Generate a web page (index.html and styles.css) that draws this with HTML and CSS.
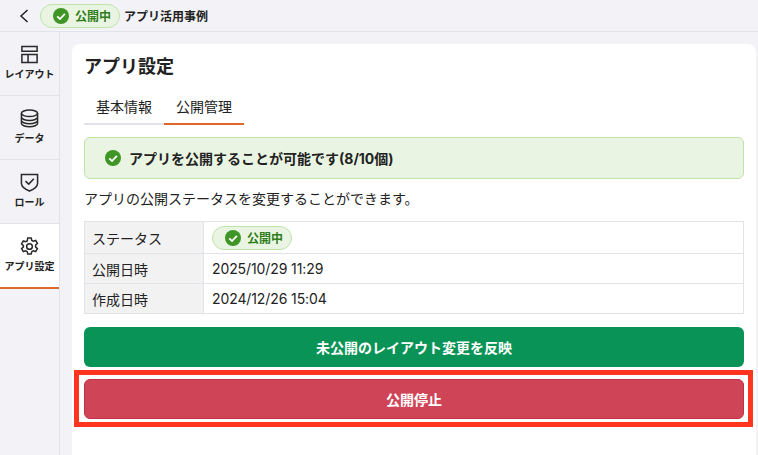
FILE: index.html
```html
<!doctype html>
<html lang="ja">
  <head>
    <meta charset="utf-8" />
    <title>アプリ設定</title>
    <link rel="stylesheet" href="styles.css">
  </head>
  <body>
    <header class="topbar">
      <svg class="back" viewBox="0 0 12 16" width="12" height="16"><path d="M9.500 2 3 8l6.500 6" /></svg>
      <span class="badge badge-top">
        <svg class="check" viewBox="0 0 16 16"><circle cx="8" cy="8" r="8" /><path d="M4.200 8.300 7 11l4.900-5.200" /></svg>
        公開中
      </span>
      <span class="app-name">アプリ活用事例</span>
    </header>

    <div class="body-row">
      <nav class="sidebar">
        <a class="nav-item">
          <svg viewBox="0 0 20 20"><path d="M2 1.500h16v5H2zM2 10h6.500v8.500H2zM8.500 10H18v8.500H8.500z" /></svg>
          <span>レイアウト</span>
        </a>
        <a class="nav-item">
          <svg viewBox="0 0 20 20"><ellipse cx="10" cy="4.500" rx="8.500" ry="3.500" /><path d="M1.500 4.500v10.500c0 2 3.800 3.800 8.500 3.800s8.500-1.800 8.500-3.800V4.500M1.500 8.500c0 2 3.800 3.500 8.500 3.500s8.500-1.500 8.500-3.500M1.500 12c0 2 3.800 3.500 8.500 3.500s8.500-1.500 8.500-3.500" /></svg>
          <span>データ</span>
        </a>
        <a class="nav-item">
          <svg viewBox="0 0 20 20"><path d="M1.500 1.500h17v9.500c0 4-4.500 6.300-8.500 8-4-1.700-8.500-4-8.500-8zM5.800 8.500l3.400 3.200L14.600 6" /></svg>
          <span>ロール</span>
        </a>
        <a class="nav-item active">
          <svg viewBox="0 0 20 20"><circle cx="10" cy="10" r="3" /><path d="M8.200 1h3.600l.6 2.600 1.600.9 2.500-.8 1.800 3.100-1.900 1.800v1.800l1.900 1.800-1.800 3.100-2.500-.8-1.600.9-.6 2.600H8.200l-.6-2.600-1.600-.9-2.500.8-1.800-3.100 1.900-1.800V9.100L1.700 7.300l1.800-3.100 2.500.8 1.600-.9z" /></svg>
          <span>アプリ設定</span>
        </a>
      </nav>

      <main class="content">
        <section class="card">
          <h1>アプリ設定</h1>

          <div class="tabs">
            <div class="tab">基本情報</div>
            <div class="tab active">公開管理</div>
          </div>

          <div class="notice">
            <svg class="check" viewBox="0 0 16 16"><circle cx="8" cy="8" r="8" /><path d="M4.200 8.300 7 11l4.900-5.200" /></svg>
            <span>アプリを公開することが可能です(8/10個)</span>
          </div>

          <p class="lead">アプリの公開ステータスを変更することができます。</p>

          <table class="status-table">
            <tr class="row-status">
              <th>ステータス</th>
              <td>
                <span class="badge">
                  <svg class="check" viewBox="0 0 16 16"><circle cx="8" cy="8" r="8" /><path d="M4.200 8.300 7 11l4.900-5.200" /></svg>
                  公開中
                </span>
              </td>
            </tr>
            <tr>
              <th>公開日時</th>
              <td>2025/10/29 11:29</td>
            </tr>
            <tr>
              <th>作成日時</th>
              <td>2024/12/26 15:04</td>
            </tr>
          </table>

          <button class="btn btn-green">未公開のレイアウト変更を反映</button>
          <div class="danger-wrap">
            <button class="btn btn-red">公開停止</button>
            <div class="highlight"></div>
          </div>
        </section>
      </main>
    </div>
  </body>
</html>
```

FILE: styles.css
```css
html,
body {
  height: 100%;
}

body {
  margin: 0;
  background: #f2f2f7;
  color: #222;
  font-family: 'Inter', 'Noto Sans CJK JP', sans-serif;
  font-size: 14px;
  overflow: hidden;
}

.topbar {
  display: flex;
  align-items: center;
  height: 31px;
  padding-left: 18px;
  border-bottom: 1px solid #e2e2e8;
}

.back {
  fill: none;
  stroke: #222;
  stroke-width: 1.500;
  margin-right: 10px;
}

.check {
  width: 16px;
  height: 16px;
  flex: none;
}

.check circle {
  fill: #3f9526;
}

.check path {
  fill: none;
  stroke: #fff;
  stroke-width: 1.800;
}

.badge {
  display: inline-flex;
  align-items: center;
  gap: 6px;
  box-sizing: border-box;
  width: 80px;
  height: 24px;
  padding-left: 12px;
  background: #e9f5e2;
  border: 1px solid #bfe3ab;
  border-radius: 12px;
  color: #2f7d1b;
  font-size: 12px;
  font-weight: 700;
  letter-spacing: 0;
  vertical-align: middle;
}

.badge-top {
  margin-right: 4px;
}

.app-name {
  font-size: 12px;
  font-weight: 700;
}

.body-row {
  display: flex;
  height: 423px;
}

.sidebar {
  width: 59px;
  flex: none;
  border-right: 1px solid #e2e2e8;
}

.nav-item {
  display: flex;
  flex-direction: column;
  align-items: center;
  box-sizing: border-box;
  height: 64px;
  padding-top: 13px;
  border-bottom: 1px solid #e2e2e8;
  font-size: 10px;
  font-weight: 700;
}

.nav-item svg {
  width: 19px;
  height: 19px;
  margin-bottom: 2px;
  fill: none;
  stroke: #2a2a2a;
  stroke-width: 1.600;
}

.nav-item.active {
  height: 65px;
  background: #fff;
  border-bottom: 2px solid #e0672b;
}

.content {
  flex: 1;
  padding: 12px 2px 0 12px;
}

.card {
  height: 100%;
  box-sizing: border-box;
  padding: 11px 12px 0;
  background: #fff;
  border-radius: 8px 8px 0 0;
}

h1 {
  margin: 0;
  height: 24px;
  line-height: 24px;
  font-size: 18px;
  font-weight: 700;
}

.tabs {
  display: flex;
  margin-top: 12px;
}

.tab {
  width: 80px;
  height: 34px;
  box-sizing: border-box;
  text-align: center;
  line-height: 32px;
  border-bottom: 2px solid #e2e2e8;
}

.tab.active {
  border-bottom-color: #e0672b;
}

.notice {
  display: flex;
  align-items: center;
  gap: 8px;
  box-sizing: border-box;
  height: 42px;
  margin-top: 12px;
  padding-left: 20px;
  background: #e9f5e2;
  border: 1px solid #bfe3ab;
  border-radius: 6px;
  font-weight: 700;
}

.lead {
  margin: 11px 0 14px;
  height: 17px;
  line-height: 17px;
}

.status-table {
  width: 100%;
  border-collapse: collapse;
  table-layout: fixed;
}

.status-table th,
.status-table td {
  height: 29px;
  padding: 0 8px 0 7px;
  border: 1px solid #e2e2e8;
  text-align: left;
  font-weight: 400;
}

.status-table td {
  padding-left: 8px;
  letter-spacing: -0.1px;
}

.status-table th {
  width: 103px;
  background: #f2f2f3;
}

.status-table .row-status th,
.status-table .row-status td {
  height: 31px;
}

.btn {
  display: block;
  width: 100%;
  height: 40px;
  border-radius: 6px;
  border: 0;
  color: #fff;
  font: inherit;
  font-weight: 700;
}

.btn-green {
  margin-top: 13px;
  background: #0a9356;
}

.danger-wrap {
  position: relative;
  margin-top: 12px;
}

.btn-red {
  background: #d04457;
  border: 1px solid #c22f43;
}

.highlight {
  position: absolute;
  inset: -9px -9px -8px -10px;
  border: 5px solid #ff3520;
}
```
